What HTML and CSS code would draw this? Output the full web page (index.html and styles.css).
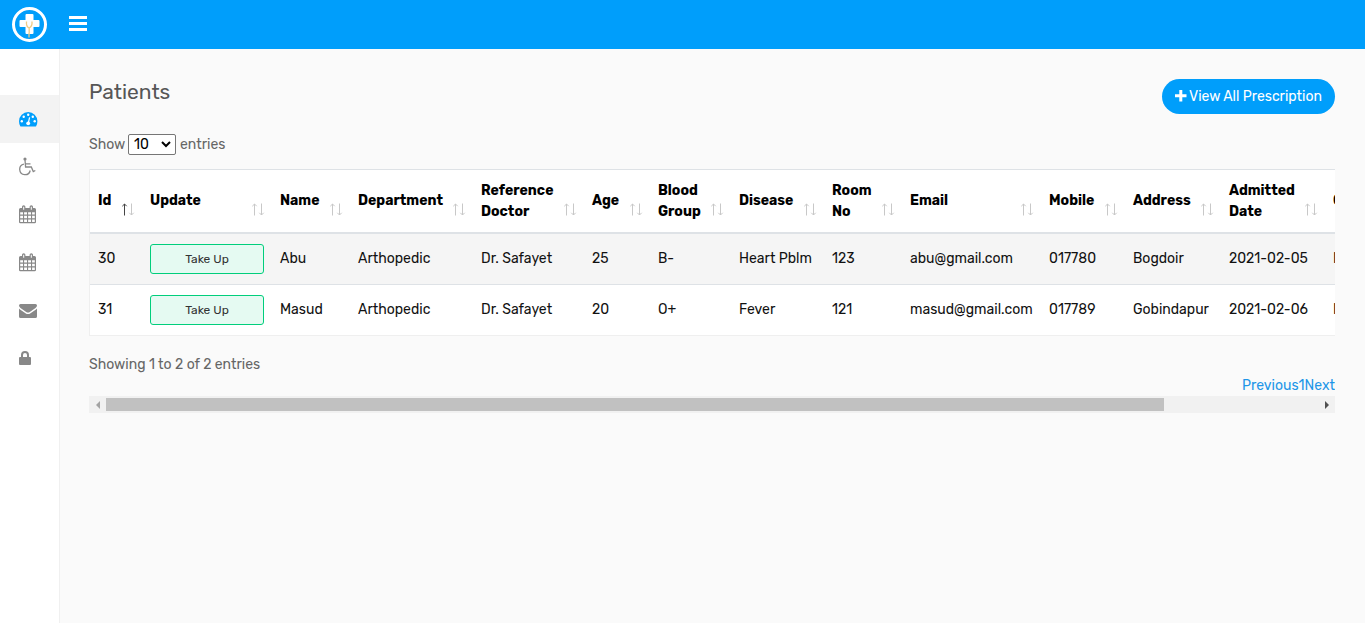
FILE: index.html
```
<!DOCTYPE html>
<html lang="en">
<head>
<meta charset="utf-8">
<title>Patients</title>
<link rel="stylesheet" href="styles.css">
</head>
<body>
<svg class="defs" width="0" height="0" aria-hidden="true">
  <symbol id="calendar" viewBox="0 0 18 19">
    <path fill="currentColor" fill-rule="evenodd" d="M1.500 3H3V1.800Q3 .3 4.700.3T6.400 1.800V3h4.200V1.800q0-1.500 1.700-1.500T14 1.800V3h1.500Q17 3 17 4.500V17q0 1.300-1.400 1.300H1.400Q0 18.300 0 17V4.500Q0 3 1.500 3ZM4.200 1.800v3h1v-3ZM11.800 1.800v3h1v-3ZM1.200 7.200v2.400H4V7.200ZM5.100 7.200v2.400H8V7.200ZM9.100 7.200v2.400H12V7.200ZM13.100 7.200v2.400h2.700V7.200ZM1.200 10.800v2.500H4v-2.500ZM5.100 10.800v2.500H8v-2.500ZM9.100 10.800v2.500H12v-2.500ZM13.100 10.800v2.500h2.700v-2.500ZM1.200 14.500v2.500H4v-2.500ZM5.100 14.500v2.500H8v-2.500ZM9.100 14.500v2.500H12v-2.500ZM13.100 14.500v2.500h2.700v-2.500Z"/>
  </symbol>
  <symbol id="sort" viewBox="0 0 14 13">
    <path class="up" d="M3.500 12.500V1M1.300 3.200L3.500 1L5.700 3.200"/>
    <path class="down" d="M10.500 .5V12M8.300 9.800L10.500 12L12.700 9.800"/>
  </symbol>
</svg>
<header class="topbar">
  <svg class="logo" width="36" height="36" viewBox="0 0 36 36">
    <circle cx="17.500" cy="17.500" r="16" fill="none" stroke="#fff" stroke-width="3"/>
    <path d="M14.500 7h6q1 0 1 1v5h5q1 0 1 1v5q0 1-1 1h-5v6q0 1-1 1h-6q-1 0-1-1V20h-5q-1 0-1-1v-5q0-1 1-1h5V8q0-1 1-1Z" fill="#fff"/>
    <path d="M14.500 14.500q-.5 5 2.500 6.500q3.500-1.500 3-6.500M17.200 21v5.500M17 26v4.500" fill="none" stroke="#f0cb85" stroke-width="1.300"/>
  </svg>
  <svg class="bars" width="18" height="15" viewBox="0 0 18 15"><path d="M0 0h18v3H0zM0 6h18v3H0zM0 12h18v3H0z" fill="#fff"/></svg>
</header>
<div class="shell">
  <nav class="sidebar">
    <a class="item active"><svg width="19" height="15" viewBox="0 0 19 15"><path d="M9.200 0A9.200 9.200 0 0 0 0 9.200Q0 12 1.300 14.300q.2.300.6.300h14.600q.4 0 .6-.3Q18.400 12 18.400 9.200A9.200 9.200 0 0 0 9.200 0Z" fill="#009efb"/><g fill="#fff"><circle cx="2.800" cy="9.300" r="1.200"/><circle cx="4.700" cy="4.700" r="1.200"/><circle cx="9.200" cy="2.700" r="1.200"/><circle cx="13.800" cy="4.700" r="1.200"/><circle cx="15.700" cy="9.300" r="1.200"/><circle cx="9.200" cy="11.300" r="1.900"/></g><path d="M9.300 11l1.300-5.700" stroke="#fff" stroke-width="1.200"/></svg></a>
    <a class="item raised"><svg width="17" height="19" viewBox="0 0 17 19" fill="none" stroke="currentColor" stroke-width="1.300"><circle cx="6" cy="2" r="1.600" fill="currentColor" stroke="none"/><path d="M6 3l.6 7h5.700l2 4.500 2-1M6.500 6.800h5M4.900 7.200A5.300 5.300 0 1 0 11.200 13.500"/></svg></a>
    <a class="item raised"><svg width="18" height="19"><use href="#calendar"/></svg></a>
    <a class="item raised"><svg width="18" height="19"><use href="#calendar"/></svg></a>
    <a class="item"><svg width="18" height="14" viewBox="0 0 18 14" fill="currentColor"><path d="M1.500 0h15Q18 0 18 1.600 18 3 16.500 4L10.800 7.900Q9 9.200 7.200 7.900L1.500 4Q0 3 0 1.600 0 0 1.500 0Z"/><path d="M0 4.600q.4.400 1 .8l5.500 3.800q2.500 1.700 5 0L17 5.400q.6-.4 1-.8v7.800q0 1.600-1.600 1.600H1.600Q0 14 0 12.400Z"/></svg></a>
    <a class="item raised"><svg width="12" height="14" viewBox="0 0 12 14"><path fill="currentColor" fill-rule="evenodd" d="M2 6V4Q2 0 6 0t4 4v2h1q1 0 1 1v6q0 1-1 1H1q-1 0-1-1V7q0-1 1-1ZM4 6h4V4q0-2-2-2T4 4Z"/></svg></a>
  </nav>
  <main class="content">
    <div class="heading">
      <h1 class="title">Patients</h1>
      <a class="add"><svg width="12" height="12" viewBox="0 0 12 12"><path d="M4.300 0h3v4.300H11.500v3H7.300v4.200h-3V7.300H0v-3h4.300z" fill="#fff"/></svg><span>View All Prescription</span></a>
    </div>
    <div class="length"><span class="show">Show</span><span class="select">10<svg width="10" height="7" viewBox="0 0 10 7"><path d="M1 1l4 4 4-4" fill="none" stroke="#000" stroke-width="2"/></svg></span><span class="entries">entries</span></div>
    <div class="scroller">
      <table class="grid">
        <colgroup><col class="c-id"><col class="c-update"><col class="c-name"><col class="c-dept"><col class="c-ref"><col class="c-age"><col class="c-blood"><col class="c-disease"><col class="c-room"><col class="c-email"><col class="c-mobile"><col class="c-address"><col class="c-date"><col class="c-last"></colgroup>
        <thead><tr>
          <th class="sorted">Id<svg class="sort"><use href="#sort"/></svg></th>
          <th>Update<svg class="sort"><use href="#sort"/></svg></th>
          <th>Name<svg class="sort"><use href="#sort"/></svg></th>
          <th>Department<svg class="sort"><use href="#sort"/></svg></th>
          <th class="tall">Reference<br>Doctor<svg class="sort"><use href="#sort"/></svg></th>
          <th>Age<svg class="sort"><use href="#sort"/></svg></th>
          <th class="tall">Blood<br>Group<svg class="sort"><use href="#sort"/></svg></th>
          <th>Disease<svg class="sort"><use href="#sort"/></svg></th>
          <th class="tall">Room<br>No<svg class="sort"><use href="#sort"/></svg></th>
          <th>Email<svg class="sort"><use href="#sort"/></svg></th>
          <th>Mobile<svg class="sort"><use href="#sort"/></svg></th>
          <th>Address<svg class="sort"><use href="#sort"/></svg></th>
          <th class="tall">Admitted<br>Date<svg class="sort"><use href="#sort"/></svg></th>
          <th>C</th>
        </tr></thead>
        <tbody>
          <tr><td>30</td><td class="action"><a class="take">Take Up</a></td><td>Abu</td><td>Arthopedic</td><td>Dr. Safayet</td><td>25</td><td>B-</td><td>Heart Pblm</td><td>123</td><td>abu@gmail.com</td><td>017780</td><td>Bogdoir</td><td>2021-02-05</td><td>N</td></tr>
          <tr><td>31</td><td class="action"><a class="take">Take Up</a></td><td>Masud</td><td>Arthopedic</td><td>Dr. Safayet</td><td>20</td><td>O+</td><td>Fever</td><td>121</td><td>masud@gmail.com</td><td>017789</td><td>Gobindapur</td><td>2021-02-06</td><td>N</td></tr>
        </tbody>
      </table>
      <div class="info">Showing 1 to 2 of 2 entries</div>
      <div class="pager"><a>Previous</a><a>1</a><a>Next</a></div>
    </div>
    <div class="scrollbar">
      <span class="arrow left"></span><span class="thumb"></span><span class="arrow right"></span>
    </div>
  </main>
</div>
</body>
</html>
```
FILE: styles.css
```
* { box-sizing: border-box; }
body { margin: 0; height: 623px; overflow: hidden; background: #fafafa; color: #666; font: 14px/21px Rubik, Roboto, sans-serif; }
.defs { position: absolute; }
.topbar { height: 49px; background: #009efb; display: flex; align-items: flex-start; padding: 7px 0 0 12px; }
.bars { margin: 9px 0 0 21px; }
.shell { display: flex; height: 574px; }
.sidebar { width: 60px; padding-top: 46px; background: #fff; border-right: 1px solid #f0f0f0; flex: none; color: #888; }
.item { display: flex; align-items: center; height: 48px; padding-left: 19px; }
.item.raised { padding-bottom: 2px; }
.item.active { background: #f3f3f3; }
.content { flex: 1; min-width: 0; padding: 30px 30px 0 29px; }
.heading { display: flex; justify-content: space-between; height: 55px; }
.title { margin: 0; font-size: 21px; line-height: 25px; font-weight: 400; color: #565656; }
.add { display: flex; align-items: center; gap: 2px; width: 173px; height: 35px; padding-left: 13px; border-radius: 18px; background: #009efb; color: #fff; white-space: nowrap; }
.add svg { margin-top: -1px; }
.length { display: flex; align-items: center; height: 21px; }
.show { width: 39px; }
.select { display: flex; align-items: center; justify-content: space-between; width: 48px; height: 21px; padding: 0 4px 0 5px; margin-right: 4px; border: 1px solid #767676; border-radius: 2px; background: #fff; color: #000; }
.scroller { margin-top: 14px; overflow: hidden; }
.grid { width: 1316px; table-layout: fixed; border-collapse: separate; border-spacing: 0; border-left: 1px solid #efefef; border-bottom: 1px solid #efefef; background: #fff; color: #111; }
.c-id { width: 52px; } .c-update { width: 130px; } .c-name { width: 78px; } .c-dept { width: 123px; }
.c-ref { width: 111px; } .c-age { width: 66px; } .c-blood { width: 81px; } .c-disease { width: 93px; }
.c-room { width: 78px; } .c-email { width: 139px; } .c-mobile { width: 84px; } .c-address { width: 96px; }
.c-date { width: 104px; } .c-last { width: 80px; }
th { position: relative; height: 65px; padding: 0 8px 1px; border-top: 1px solid #dee2e6; border-bottom: 2px solid #dee2e6; color: #000; font-weight: 700; text-align: left; vertical-align: middle; white-space: nowrap; }
th.tall { padding-bottom: 0; }
.sort { position: absolute; right: 7px; bottom: 16px; width: 14px; height: 13px; fill: none; stroke: #c8c8c8; stroke-width: 1; }
.sorted .sort { --up: #444; }
.up { stroke: var(--up, #c8c8c8); }
td { height: 51px; padding: 0 8px 1px; border-top: 1px solid #dee2e6; white-space: nowrap; }
td.action { padding-bottom: 0; }
tbody tr:first-child td { height: 50px; border-top: 0; background: #f5f5f5; }
.take { display: block; width: 114px; height: 30px; border: 1px solid #00ce7c; border-radius: 3px; background: #e5faf2; color: #333; font-size: 12px; line-height: 28px; text-align: center; }
.info { margin-top: 18px; }
.pager { display: flex; justify-content: flex-end; color: #1e96e8; }
.scrollbar { display: flex; align-items: center; height: 17px; background: #f1f1f1; }
.arrow { width: 17px; display: flex; justify-content: center; }
.arrow::before { content: ""; border: 4px solid transparent; }
.left::before { border-right-color: #a3a3a3; border-left: 0; }
.right::before { border-left-color: #505050; border-right: 0; }
.thumb { width: 1058px; height: 13px; margin-right: auto; background: #c1c1c1; }
```
